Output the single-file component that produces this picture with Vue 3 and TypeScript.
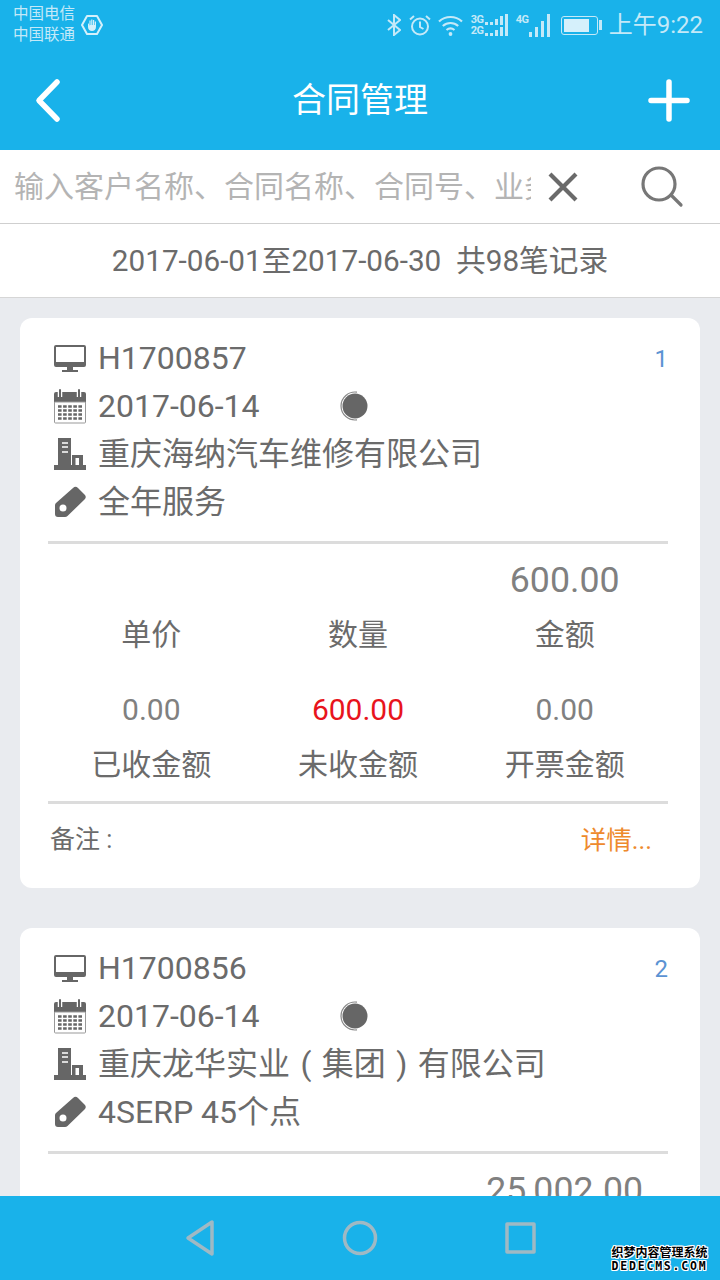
<template>
  <div class="page">
    <header class="top">
      <div class="status">
        <div class="carriers">
          <span>中国电信</span>
          <span>中国联通</span>
        </div>
        <svg class="hand" width="22" height="22" viewBox="0 0 22 22">
          <path d="M6 2h10l5 9-5 9H6l-5-9z" fill="none" stroke="#d4f0fb" stroke-width="2" stroke-linejoin="round" />
          <path d="M7 9.5V13c0 2.5 1.800 4 4 4s4-1.500 4-4V7.500h-1.200V11h-.6V6H12v5h-.6V5.500h-1.200V11h-.6V6.500H8.400V12l-.6-2.500z" fill="#d4f0fb" />
        </svg>
        <div class="status-right">
          <svg class="s-bt" width="14" height="22" viewBox="0 0 14 22" fill="none" stroke="#c4e9f8" stroke-width="2">
            <path d="M1 6l12 10-6 5V1l6 5L1 16" />
          </svg>
          <svg class="s-alarm" width="22" height="22" viewBox="0 0 22 22" fill="none" stroke="#c4e9f8" stroke-width="2">
            <circle cx="11" cy="12.500" r="8" />
            <path d="M11 7.500V13l3.500 2M1 5.500L5 2M21 5.500L17 2" />
          </svg>
          <svg class="s-wifi" width="25" height="21" viewBox="0 0 25 21" fill="none" stroke="#c4e9f8" stroke-width="2.200">
            <path d="M1 6.500c6.500-6 16.500-6 23 0M4.800 11c4.500-4 10.900-4 15.400 0M8.500 15c2.500-2 5.500-2 8 0" />
            <circle cx="12.500" cy="19" r="1.900" fill="#c4e9f8" stroke="none" />
          </svg>
          <div class="net">
            <span class="net-line"><i>3G</i><b v-for="(h, n) in netBars" :key="n" :style="{ height: h + 'px' }"></b></span>
            <span class="net-line"><i>2G</i><b v-for="(h, n) in netBars" :key="n" :style="{ height: h + 'px' }"></b></span>
          </div>
          <div class="sig">
            <i>4G</i>
            <b v-for="h in sigBars" :key="h" :style="{ height: h + 'px' }"></b>
          </div>
          <div class="battery"><div class="battery-fill"></div></div>
          <span class="clock">上午9:22</span>
        </div>
      </div>
      <div class="nav">
        <svg width="48" height="48" viewBox="0 0 48 48" fill="none" stroke="#fff" stroke-width="5.500" stroke-linecap="round" stroke-linejoin="round">
          <path d="M33 6L15 24.500 33 43" />
        </svg>
        <h1 class="title">合同管理</h1>
        <svg width="48" height="48" viewBox="0 0 48 48" fill="none" stroke="#fff" stroke-width="5.500" stroke-linecap="round">
          <path d="M3 24.500h36M21 6v37" />
        </svg>
      </div>
    </header>

    <div class="search">
      <div class="search-text">输入客户名称、合同名称、合同号、业务员</div>
      <svg class="clear" width="36" height="36" viewBox="0 0 36 36" fill="none" stroke="#6a6a6a" stroke-width="4.200">
        <path d="M5 5l26 26M31 5L5 31" />
      </svg>
      <svg class="find" width="44" height="44" viewBox="0 0 44 44" fill="none" stroke="#777" stroke-width="3.200" stroke-linecap="round">
        <circle cx="19" cy="19" r="16" />
        <path d="M31 30l10 10" />
      </svg>
    </div>
    <div class="range">2017-06-01至2017-06-30&nbsp;&nbsp;共98笔记录</div>

    <main class="list">
      <section v-for="c in contracts" :key="c.no" class="card">
        <div class="info">
          <div class="row">
            <svg class="ico" width="34" height="32" viewBox="0 0 34 32">
              <path d="M3 3h28a2 2 0 0 1 2 2v18a2 2 0 0 1-2 2H3a2 2 0 0 1-2-2V5a2 2 0 0 1 2-2zm0 2v15h28V5z" fill="#666" fill-rule="evenodd" />
              <path d="M14 25h6v3h5v2H9v-2h5z" fill="#666" />
            </svg>
            <span class="row-text">{{ c.no }}</span>
            <span class="index">{{ c.index }}</span>
          </div>
          <div class="row">
            <svg class="ico" width="34" height="36" viewBox="0 0 34 36">
              <path d="M3 4h28a2 2 0 0 1 2 2v8H1V6a2 2 0 0 1 2-2z" fill="#666" />
              <path d="M1.500 14h31v20a1 1 0 0 1-1 1h-29a1 1 0 0 1-1-1z" fill="#fff" stroke="#999" />
              <path d="M5 18.500h24M5 22.500h24M5 26.500h24M5 30.500h24" stroke="#666" stroke-width="2.500" stroke-dasharray="3.600 1.500" />
              <path d="M7 1v8M26 1v8" stroke="#fff" stroke-width="4.500" />
              <path d="M7 2v7M26 2v7" stroke="#666" stroke-width="2" stroke-linecap="round" />
            </svg>
            <span class="row-text date">{{ c.date }}</span>
            <svg class="state" width="32" height="32" viewBox="0 0 32 32">
              <circle cx="15" cy="16" r="12.500" fill="#666" />
              <path d="M17 2.140A14 14 0 1 0 17 29.860" fill="none" stroke="#888" stroke-width="1.200" />
            </svg>
          </div>
          <div class="row">
            <svg class="ico" width="34" height="34" viewBox="0 0 34 34">
              <path d="M5 1h13v27H5zM1 28h32v5H1z" fill="#666" />
              <path d="M9 6h6M9 10h6M9 15h6" stroke="#fff" stroke-width="1.500" />
              <path d="M19 18h11v10H19zm3.500 3v7h3.500v-7z" fill="#666" fill-rule="evenodd" />
            </svg>
            <span class="row-text customer">{{ c.customer }}</span>
          </div>
          <div class="row">
            <svg class="ico" width="34" height="32" viewBox="0 0 34 32">
              <path
                d="M20 2a3.500 3.500 0 0 1 5 0l6.500 6.500a3.500 3.500 0 0 1 0 5L14.500 30a3.500 3.500 0 0 1-2.500 1H5a3 3 0 0 1-3-3v-8.500a3.500 3.500 0 0 1 1-2.500zM6.500 22a3.500 3.500 0 1 0 7 0 3.500 3.500 0 1 0-7 0z"
                fill="#666"
                fill-rule="evenodd"
              />
            </svg>
            <span class="row-text">{{ c.product }}</span>
          </div>
        </div>
        <div class="figures">
          <div v-for="f in c.figures" :key="f.label" class="figure">
            <span class="fig-value" :class="{ big: f.big, owed: f.owed }">{{ f.value }}</span>
            <span class="fig-label">{{ f.label }}</span>
          </div>
        </div>
        <div class="foot">
          <span>备注 :</span>
          <span class="more">详情...</span>
        </div>
      </section>
    </main>

    <footer class="softkeys">
      <svg width="34" height="38" viewBox="0 0 34 38" fill="none" stroke="#9fb9c4" stroke-width="3.500" stroke-linejoin="round">
        <path d="M29 3v32L5 19z" />
      </svg>
      <svg width="36" height="36" viewBox="0 0 36 36" fill="none" stroke="#9fb9c4" stroke-width="3.500">
        <circle cx="18" cy="18" r="15.500" />
      </svg>
      <svg class="key-square" width="34" height="34" viewBox="0 0 34 34" fill="none" stroke="#9fb9c4" stroke-width="3.500" stroke-linejoin="round">
        <path d="M3 3h27v28H3z" />
      </svg>
    </footer>
    <div class="mark">
      <span>织梦内容管理系统</span>
      <span class="mark-en">DEDECMS.COM</span>
    </div>
  </div>
</template>

<script setup lang="ts">
interface Figure {
  label: string
  value: string
  big?: boolean
  owed?: boolean
}

interface Contract {
  index: number
  no: string
  date: string
  customer: string
  product: string
  figures: Figure[]
}

const netBars = [3, 3, 6, 9, 11]
const sigBars = [5, 10, 16, 23]

const contracts: Contract[] = [
  {
    index: 1,
    no: 'H1700857',
    date: '2017-06-14',
    customer: '重庆海纳汽车维修有限公司',
    product: '全年服务',
    figures: [
      { label: '单价', value: '' },
      { label: '数量', value: '' },
      { label: '金额', value: '600.00', big: true },
      { label: '已收金额', value: '0.00' },
      { label: '未收金额', value: '600.00', owed: true },
      { label: '开票金额', value: '0.00' }
    ]
  },
  {
    index: 2,
    no: 'H1700856',
    date: '2017-06-14',
    customer: '重庆龙华实业 ( 集团 ) 有限公司',
    product: '4SERP 45个点',
    figures: [
      { label: '单价', value: '' },
      { label: '数量', value: '' },
      { label: '金额', value: '25,002.00', big: true },
      { label: '已收金额', value: '0.00' },
      { label: '未收金额', value: '25,002.00', owed: true },
      { label: '开票金额', value: '0.00' }
    ]
  }
]
</script>

<style>
html,
body {
  margin: 0;
  background: #e9ebef;
}
</style>

<style scoped>
.page {
  position: relative;
  display: flex;
  flex-direction: column;
  width: 720px;
  height: 1280px;
  overflow: hidden;
  background: #e9ebef;
  color: #6b6b6b;
  font-family: Roboto, "Noto Sans CJK SC", sans-serif;
}

.top {
  flex: none;
  height: 150px;
  background: #19b2ea;
}

.status {
  display: flex;
  align-items: center;
  height: 50px;
  padding: 0 17px 0 13px;
}

.carriers {
  display: flex;
  flex-direction: column;
  margin-right: 6px;
  color: #c4e9f8;
  font-size: 15.500px;
  line-height: 21px;
}

.status-right {
  display: flex;
  align-items: center;
  margin-left: auto;
}

.s-alarm {
  margin-left: 8px;
}

.s-wifi {
  margin-left: 7px;
}

.net {
  display: flex;
  flex-direction: column;
  margin-left: 8px;
}

.net-line {
  display: flex;
  align-items: flex-end;
  gap: 2px;
  height: 11px;
}

.net-line i,
.sig i {
  font-style: normal;
  font-size: 11px;
  font-weight: 700;
  letter-spacing: -0.5px;
  line-height: 11px;
  color: #c4e9f8;
}

.net-line i {
  width: 12px;
}

.net-line b,
.sig b {
  display: block;
  width: 3px;
  background: #c4e9f8;
}

.sig {
  display: flex;
  align-items: flex-end;
  gap: 3px;
  height: 23px;
  margin-left: 8px;
}

.sig i {
  align-self: flex-start;
  width: 11px;
  margin-right: -1px;
}

.battery {
  position: relative;
  box-sizing: border-box;
  width: 37px;
  height: 19px;
  margin-left: 11px;
  margin-right: 11px;
  padding: 2px;
  border: 1.500px solid #c4e9f8;
  border-radius: 3px;
}

.battery::after {
  content: "";
  position: absolute;
  top: 3px;
  right: -5px;
  width: 2.500px;
  height: 10px;
  background: #c4e9f8;
}

.battery-fill {
  width: 80%;
  height: 100%;
  background: #d5f0fb;
}

.clock {
  color: #c4e9f8;
  font-size: 24px;
  line-height: 30px;
}

.nav {
  display: flex;
  align-items: center;
  justify-content: space-between;
  height: 100px;
  padding: 0 24px;
}

.title {
  margin: 0;
  color: #fff;
  font-size: 34px;
  font-weight: 400;
  line-height: 50px;
}

.search {
  flex: none;
  display: flex;
  align-items: center;
  height: 73px;
  padding-left: 14px;
  background: #fff;
  border-bottom: 1px solid #cfcfcf;
}

.search-text {
  width: 517px;
  overflow: hidden;
  color: #b4b4b4;
  font-size: 30px;
  line-height: 44px;
  white-space: nowrap;
}

.clear {
  margin-left: 14px;
}

.find {
  margin-left: 59px;
}

.range {
  flex: none;
  height: 73px;
  background: #fff;
  border-bottom: 1px solid #d6d6d6;
  font-size: 29.700px;
  line-height: 73px;
  text-align: center;
}

.list {
  flex: 1;
  min-height: 0;
  overflow: hidden;
  padding: 20px 20px 0;
}

.card {
  padding: 16px 32px 12px 28px;
  margin-bottom: 40px;
  background: #fff;
  border-radius: 12px;
}

.info {
  box-sizing: border-box;
  height: 210px;
  border-bottom: 3px solid #dcdcdc;
}

.row {
  display: flex;
  align-items: center;
  height: 48px;
  padding-left: 5px;
}

.ico {
  flex: none;
  margin-right: 11px;
}

.row-text {
  font-size: 32px;
  line-height: 48px;
  white-space: nowrap;
}

.customer {
  word-spacing: 2.500px;
}

.date {
  width: 240px;
}

.state {
  margin-left: 2px;
}

.index {
  margin-left: auto;
  padding-top: 2px;
  color: #5b93d3;
  font-size: 24px;
}

.figures {
  box-sizing: border-box;
  display: grid;
  grid-template-columns: repeat(3, 1fr);
  align-content: start;
  row-gap: 34px;
  height: 260px;
  padding-top: 16px;
  border-bottom: 3px solid #dcdcdc;
}

.figure {
  display: flex;
  flex-direction: column;
  align-items: center;
  white-space: nowrap;
}

.fig-value {
  height: 40px;
  color: #808080;
  font-size: 30px;
  line-height: 40px;
}

.fig-value.big {
  font-size: 35.700px;
}

.fig-value.owed {
  color: #e8141c;
}

.fig-label {
  margin-top: 14px;
  font-size: 30px;
  line-height: 42px;
}

.foot {
  display: flex;
  align-items: center;
  justify-content: space-between;
  height: 72px;
  padding: 0 16px 0 2px;
  font-size: 25px;
  line-height: 36px;
}

.more {
  color: #ee8a2d;
  font-size: 25.500px;
}

.softkeys {
  flex: none;
  display: flex;
  align-items: center;
  gap: 125px;
  height: 84px;
  padding-left: 183px;
  background: #19b2ea;
}

.key-square {
  margin-left: 1px;
}

.mark {
  position: absolute;
  right: 12px;
  bottom: 7px;
  display: flex;
  flex-direction: column;
  width: 97px;
  color: #000;
  font-family: "Noto Sans CJK SC", sans-serif;
  font-size: 12px;
  font-weight: 700;
  line-height: 14px;
  text-align: center;
  white-space: nowrap;
  text-shadow: 1px 0 #fff, -1px 0 #fff, 0 1px #fff, 0 -1px #fff, 1px 1px #fff, -1px -1px #fff, 1px -1px #fff, -1px 1px #fff;
}

.mark-en {
  font-family: "DejaVu Sans Mono", monospace;
  font-size: 11.500px;
  letter-spacing: 1.800px;
}
</style>
